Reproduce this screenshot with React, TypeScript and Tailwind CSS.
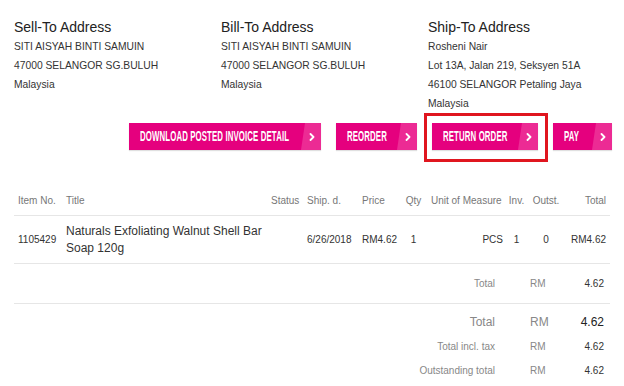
import React from 'react';

const addresses = [
  { title: 'Sell-To Address', lines: ['SITI AISYAH BINTI SAMUIN', '47000 SELANGOR SG.BULUH', 'Malaysia'] },
  { title: 'Bill-To Address', lines: ['SITI AISYAH BINTI SAMUIN', '47000 SELANGOR SG.BULUH', 'Malaysia'] },
  { title: 'Ship-To Address', lines: ['Rosheni Nair', 'Lot 13A, Jalan 219, Seksyen 51A', '46100 SELANGOR Petaling Jaya', 'Malaysia'] },
];

const cols = 'grid grid-cols-[48px_205px_36px_55px_42px_27px_80px_19px_40px_46px]';
const totalsCols = 'grid grid-cols-[1fr_35px_28px_46px]';

function Chevron() {
  return (
    <svg width="6" height="8" viewBox="0 0 6 8" fill="none">
      <polyline points="1.5,1 4.5,4 1.5,7" stroke="white" strokeWidth="1.8" strokeLinecap="round" strokeLinejoin="round" />
    </svg>
  );
}

function PinkButton({ label, width }: { label: string; width: string }) {
  return (
    <div className={`flex h-[27px] ${width} bg-[#e5007e] shadow-[0_1px_1px_rgba(0,0,0,0.12)]`}>
      <div className="flex-1 overflow-hidden pl-[11px] flex items-center">
        <span className="inline-block origin-left scale-x-[0.56] whitespace-nowrap text-[14px] font-bold text-white font-['Liberation_Sans',sans-serif] tracking-[0.2px]">
          {label}
        </span>
      </div>
      <div className="w-[20px] bg-[#ec2b94] flex items-center justify-center pl-[2px] [clip-path:polygon(4px_0,100%_0,100%_100%,0_100%)]">
        <Chevron />
      </div>
    </div>
  );
}

export default function App() {
  return (
    <div className="w-[624px] h-[386px] overflow-hidden bg-white font-['Liberation_Sans',Arial,sans-serif]">
      <div className="grid grid-cols-[207px_207px_196px] pl-[14px] pt-[18px]">
        {addresses.map(a => (
          <div key={a.title}>
            <div className="text-[14px] leading-[18px] text-[#222] mb-[1px]">{a.title}</div>
            {a.lines.map((l, i) => (
              <div key={i} className="text-[10.3px] leading-[19px] text-[#333]">{l}</div>
            ))}
          </div>
        ))}
      </div>

      <div className="flex justify-end gap-[15px] pr-[12px] mt-[10px]">
        <PinkButton label="DOWNLOAD POSTED INVOICE DETAIL" width="w-[192px]" />
        <PinkButton label="REORDER" width="w-[81px]" />
        <div className="relative">
          <PinkButton label="RETURN ORDER" width="w-[106px]" />
          <div className="absolute -left-[8px] -top-[10px] -right-[10px] -bottom-[12px] border-[3px] border-[#e0161f]"></div>
        </div>
        <PinkButton label="PAY" width="w-[59px]" />
      </div>

      <div className="mx-[14px] mt-[36px] text-[10px]">
        <div className={`${cols} h-[30px] items-center border-b border-[#e6e6e6] text-[#777]`}>
          <div className="pl-[4px]">Item No.</div>
          <div className="pl-[4px]">Title</div>
          <div className="pl-[4px]">Status</div>
          <div className="pl-[4px]">Ship. d.</div>
          <div className="pl-[4px]">Price</div>
          <div className="text-center">Qty</div>
          <div className="pl-[4px] whitespace-nowrap">Unit of Measure</div>
          <div className="text-center">Inv.</div>
          <div className="text-center">Outst.</div>
          <div className="text-right pr-[6px]">Total</div>
        </div>

        <div className={`${cols} h-[48px] items-center border-b border-[#e6e6e6] text-[#333]`}>
          <div className="pl-[4px]">1105429</div>
          <div className="pl-[4px] pr-[4px] text-[12px] leading-[17px]">Naturals Exfoliating Walnut Shell Bar Soap 120g</div>
          <div></div>
          <div className="pl-[4px]">6/26/2018</div>
          <div className="pl-[4px]">RM4.62</div>
          <div className="text-center">1</div>
          <div className="text-right pr-[4px]">PCS</div>
          <div className="text-center">1</div>
          <div className="text-center">0</div>
          <div className="text-right pr-[6px]">RM4.62</div>
        </div>

        <div className={`${totalsCols} pr-[6px] h-[40px] items-center border-b border-[#e6e6e6] text-[#888]`}>
          <div className="text-right">Total</div>
          <div></div>
          <div>RM</div>
          <div className="text-right text-[#333]">4.62</div>
        </div>

        <div className="pt-[6px] pr-[6px]">
          <div className={`${totalsCols} h-[24px] items-center text-[12px] text-[#888]`}>
            <div className="text-right">Total</div>
            <div></div>
            <div>RM</div>
            <div className="text-right text-[#222]">4.62</div>
          </div>
          <div className={`${totalsCols} h-[24px] items-center text-[#888]`}>
            <div className="text-right">Total incl. tax</div>
            <div></div>
            <div>RM</div>
            <div className="text-right text-[#333]">4.62</div>
          </div>
          <div className={`${totalsCols} h-[24px] items-center text-[#888]`}>
            <div className="text-right">Outstanding total</div>
            <div></div>
            <div>RM</div>
            <div className="text-right text-[#333]">4.62</div>
          </div>
        </div>
      </div>
    </div>
  );
}
